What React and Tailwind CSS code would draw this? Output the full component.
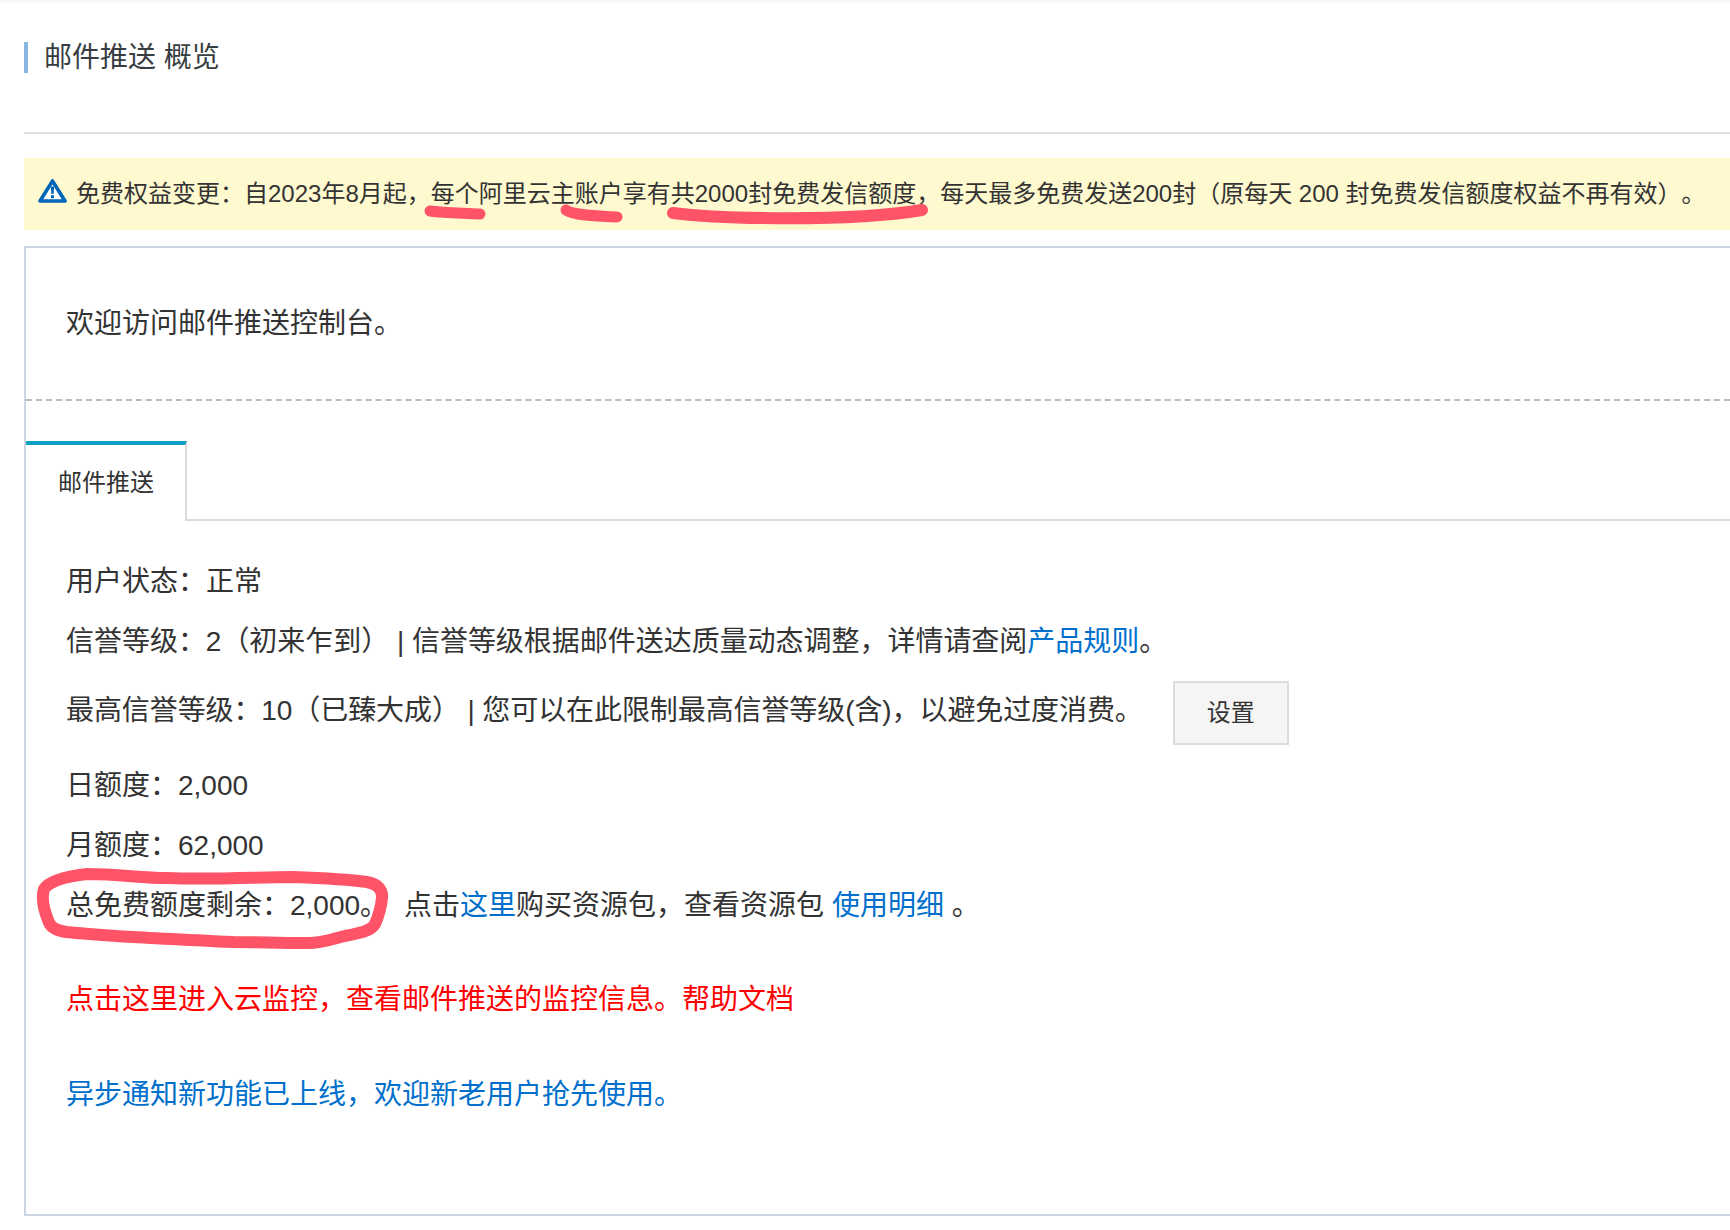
import React from 'react';

const fontStack = "font-['Liberation_Sans','Noto_Sans_CJK_SC',sans-serif]";

const Scribbles = () => (
  <svg
    className="absolute left-0 top-0 pointer-events-none"
    width="1730"
    height="1230"
    viewBox="0 0 1730 1230"
    fill="none"
    stroke="#ff5468"
    strokeLinecap="round"
    strokeLinejoin="round"
  >
    <path d="M430 211 C445 213 465 213 480 214" strokeWidth="11" />
    <path d="M566 210 C572 215 595 216 617 217" strokeWidth="11" />
    <path d="M673 213 C720 219 850 222 922 210" strokeWidth="12" />
    <path
      d="M44 889 C50 880 70 876 87 874 C120 874 140 878 167 878 C210 880 260 877 293 877 C320 878 345 879 367 882 C378 884 383 890 382 898 C381 907 379 915 375 924 C371 931 360 933 345 936 C332 939 320 944 306 943 C280 943 255 942 233 942 C195 940 165 939 133 937 C105 935 85 934 66 932 C55 930 50 927 48 920 C44 910 41 899 44 889 Z"
      strokeWidth="12"
    />
  </svg>
);

const App = () => {
  return (
    <div className={`relative w-[1730px] h-[1230px] overflow-hidden bg-white text-[#333] [text-spacing-trim:space-all] ${fontStack}`}>
      <div className="h-[3px] bg-[#f7f7f7]" />

      <div className="pl-6 pt-[39px]">
        <h1 className="h-[31px] border-l-4 border-[#88b7e0] pl-4 text-[28px] leading-[31px] font-normal text-[#373d41]">
          邮件推送 概览
        </h1>
        <div className="mt-[59px] h-0.5 bg-[#dddfe3]" />

        <div className="mt-6 h-[72px] flex items-center bg-[#fef9cf] pl-[14px] text-2xl whitespace-nowrap">
          <svg width="29" height="24" viewBox="0 0 29 24" className="mr-[9px] -mt-1.5 shrink-0">
            <path d="M14.5 2 L27 22 H2 Z" fill="#ffffff" stroke="#0066b8" strokeWidth="3.6" strokeLinejoin="round" />
            <path d="M12.8 7.5 H16.2 L15.6 15 H13.4 Z" fill="#0066b8" />
            <rect x="13" y="16.2" width="3" height="3" fill="#0066b8" />
          </svg>
          <span>
            免费权益变更：自2023年8月起，每个阿里云主账户享有共2000封免费发信额度，每天最多免费发送200封（原每天 200 封免费发信额度权益不再有效）。
          </span>
        </div>

        <div className="mt-4 h-[970px] border-2 border-r-0 border-[#cdd5e2]">
          <div className="h-[153px] border-b-2 border-dashed border-[#bdbdbd] pl-10 pt-[56px] text-[28px] leading-[40px]">
            欢迎访问邮件推送控制台。
          </div>

          <div className="mt-10 flex h-20 border-b-2 border-[#dcdcdc]">
            <div className="relative -mb-0.5 w-[161px] border-r-2 border-t-4 border-[#dcdcdc] border-t-[#0fa0c4] bg-white pl-px text-center text-2xl leading-[75px]">
              邮件推送
            </div>
          </div>

          <div className="pl-10 pt-[30px] text-[28px] whitespace-nowrap">
            <p className="leading-[61px]">用户状态：正常</p>
            <p className="leading-[60px] tracking-[-0.03px]">
              信誉等级：2（初来乍到） | 信誉等级根据邮件送达质量动态调整，详情请查阅
              <a className="text-[#0070cc]">产品规则</a>。
            </p>
            <div className="mt-[9px] flex h-16 items-center">
              <span className="mb-[4px] tracking-[-0.09px]">最高信誉等级：10（已臻大成） | 您可以在此限制最高信誉等级(含)，以避免过度消费。</span>
              <button className="ml-[30px] h-16 w-[116px] border-2 border-[#dcdcdc] bg-[#f5f5f5] text-2xl text-[#333]">
                设置
              </button>
            </div>
            <p className="mt-2.5 leading-[61px]">日额度：2,000</p>
            <p className="leading-[60px]">月额度：62,000</p>
            <p className="leading-[60px]">
              总免费额度剩余：2,000。
              <span className="ml-4">点击</span>
              <a className="text-[#0070cc]">这里</a>购买资源包，查看资源包 <a className="text-[#0070cc]">使用明细</a> 。
            </p>
            <p className="mt-[34px] leading-[60px] text-[#ff0000]">点击这里进入云监控，查看邮件推送的监控信息。帮助文档</p>
            <p className="mt-[35px] leading-[60px] text-[#0070cc]">异步通知新功能已上线，欢迎新老用户抢先使用。</p>
          </div>
        </div>
      </div>

      <Scribbles />
    </div>
  );
};

export default App;
